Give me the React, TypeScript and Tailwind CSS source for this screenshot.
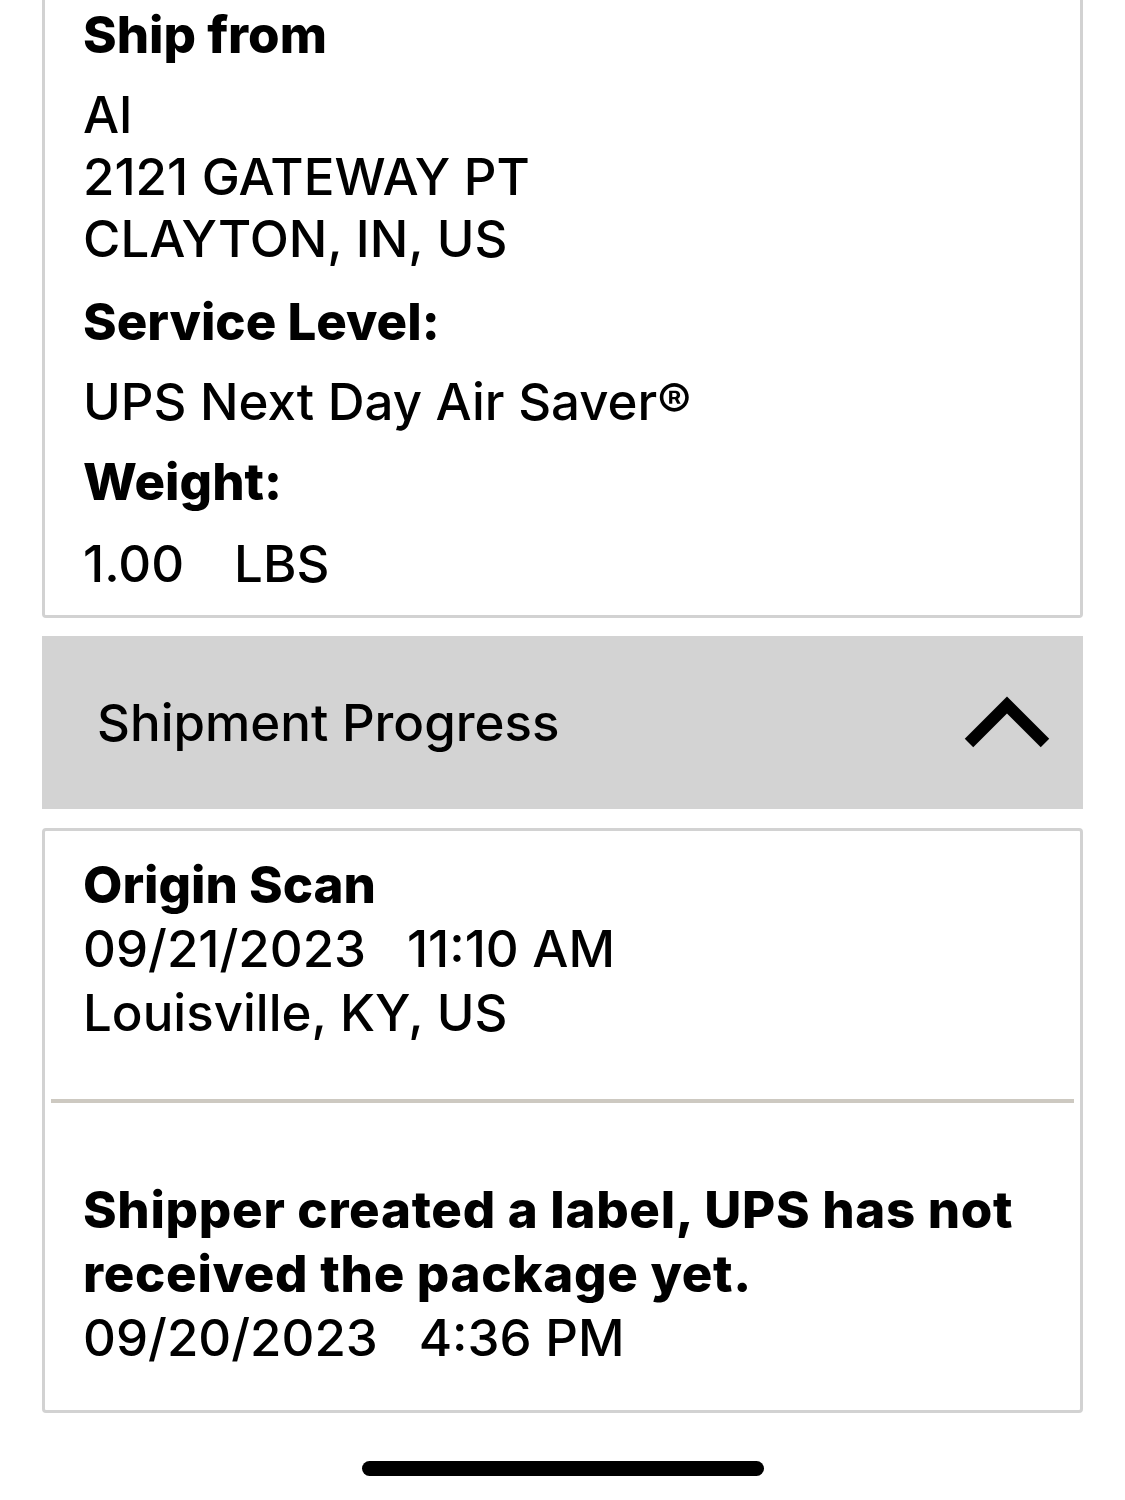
import { Fragment } from "react";

const font = { fontFamily: "Inter, 'Liberation Sans', sans-serif" };

const shipFrom = ["Al", "2121 GATEWAY PT", "CLAYTON, IN, US"];

const progress = [
  {
    title: ["Origin Scan"],
    lines: ["09/21/2023\u00a0\u00a0\u00a011:10 AM", "Louisville, KY, US"],
  },
  {
    title: ["Shipper created a label, UPS has not", "received the package yet."],
    lines: ["09/20/2023\u00a0\u00a0\u00a04:36 PM"],
  },
];

function ChevronUp() {
  return (
    <svg width="96" height="64" viewBox="960 692 96 64" className="shrink-0">
      <polyline
        points="970,744 1008,706 1046,744"
        fill="none"
        stroke="#000"
        strokeWidth="12"
        strokeLinecap="butt"
        strokeLinejoin="miter"
      />
    </svg>
  );
}

export default function App() {
  return (
    <div
      className="flex h-[1500px] w-[1125px] flex-col bg-white text-[51px] leading-[62px] font-medium text-black"
      style={font}
    >
      {/* ship details card (scrolled, top edge off screen) */}
      <div className="mx-[42px] rounded-b-[4px] border-x-[3px] border-b-[3px] border-[#d2d2d2] pt-[4px] pb-[20px] pl-[38px]">
        <p className="font-extrabold">Ship from</p>
        <div className="mt-[18px]">
          {shipFrom.map((l) => (
            <p key={l}>{l}</p>
          ))}
        </div>
        <p className="mt-[21px] font-extrabold">Service Level:</p>
        <p className="mt-[18px]">UPS Next Day Air Saver®</p>
        <p className="mt-[18px] font-extrabold">Weight:</p>
        <p className="mt-[20px]">
          1.00<span className="ml-[50px]">LBS</span>
        </p>
      </div>

      {/* Shipment Progress header */}
      <div className="mx-[42px] mt-[18px] flex h-[173px] items-center justify-between bg-[#d3d3d3] pl-[55px] pr-[28px]">
        <span className="text-[51px]">Shipment Progress</span>
        <ChevronUp />
      </div>

      {/* progress list */}
      <div className="mx-[42px] mt-[19px] rounded-[4px] border-[3px] border-[#d2d2d2]">
        {progress.map((item, i) => (
          <Fragment key={i}>
            {i > 0 && <div className="mx-[6px] h-[4px] bg-[#cdc9c1]" />}
            <div
              className={
                i === 0
                  ? "pt-[22px] pb-[54px] pl-[38px] leading-[64px]"
                  : "pt-[75px] pb-[40px] pl-[38px] leading-[64px]"
              }
            >
              {item.title.map((t) => (
                <p
                  key={t}
                  className={i === 0 ? "font-extrabold" : "font-extrabold tracking-[0.7px]"}
                >
                  {t}
                </p>
              ))}
              {item.lines.map((t) => (
                <p key={t}>{t}</p>
              ))}
            </div>
          </Fragment>
        ))}
      </div>

      {/* home indicator */}
      <div className="mt-auto mb-[24px] flex justify-center">
        <div className="h-[15px] w-[402px] rounded-full bg-black" />
      </div>
    </div>
  );
}
